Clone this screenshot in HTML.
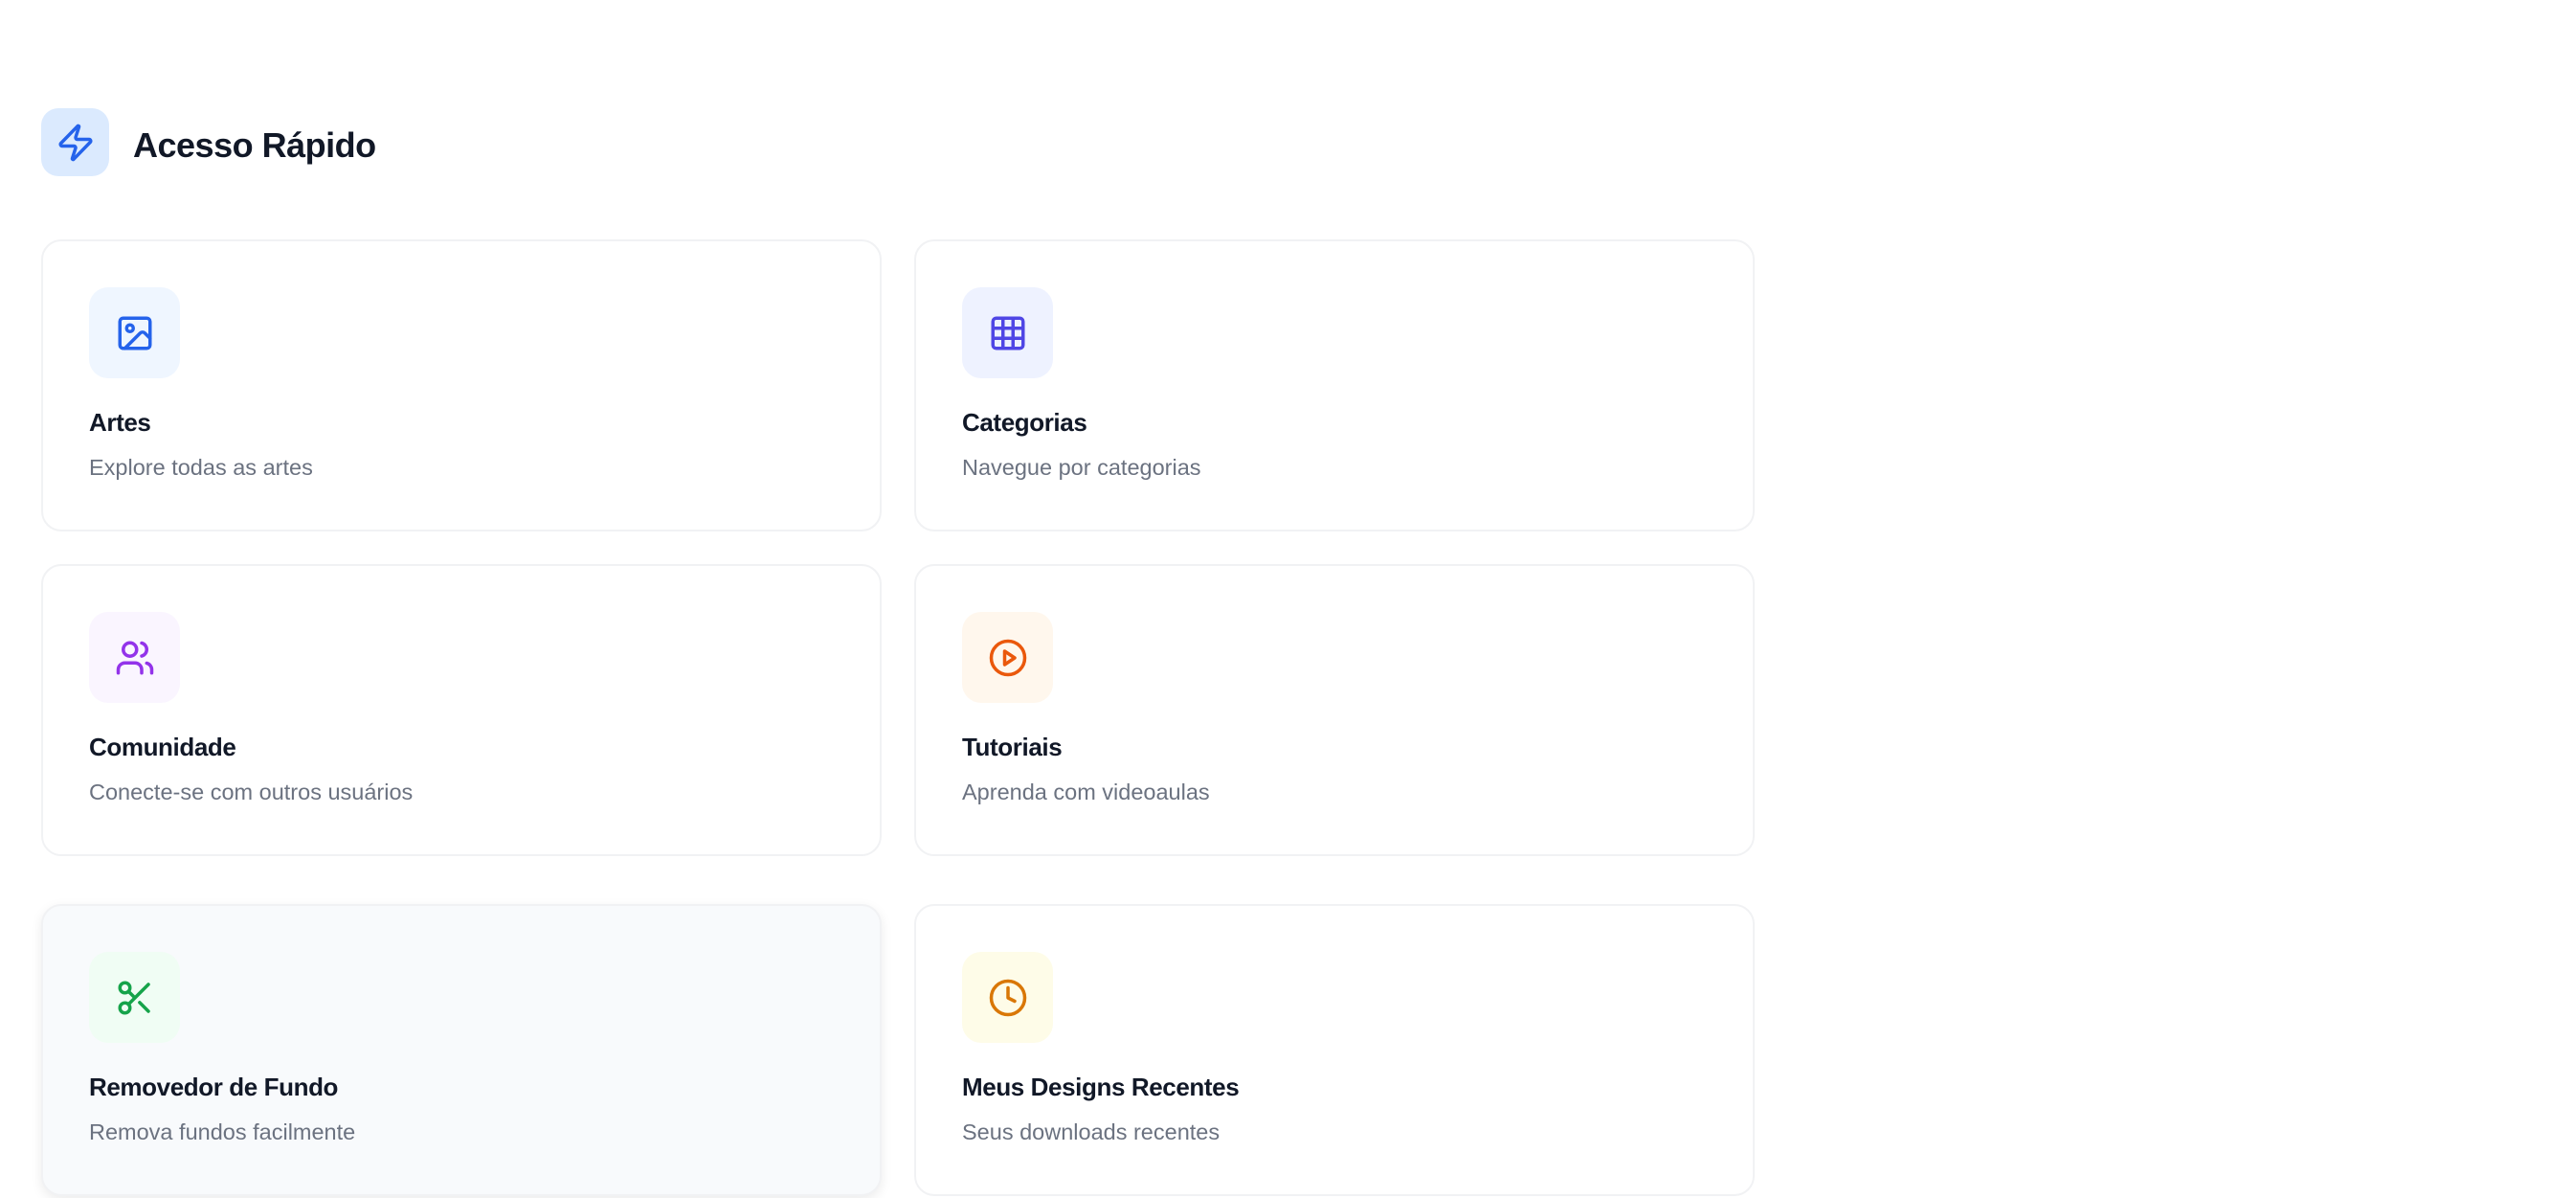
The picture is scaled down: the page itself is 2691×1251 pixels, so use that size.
<!DOCTYPE html>
<html><head><meta charset="utf-8"><style>
*{box-sizing:border-box;margin:0;padding:0}
body{width:2691px;height:1251px;background:#fff;font-family:"Liberation Sans",sans-serif;position:relative;overflow:hidden}
.hicon{position:absolute;left:43px;top:113px;width:71px;height:71px;border-radius:18px;background:#dbeafe;display:flex;align-items:center;justify-content:center}
h1{position:absolute;left:139px;top:128px;font-size:36px;font-weight:600;color:#111827;line-height:48px;letter-spacing:-0.5px}
.card{position:absolute;width:878px;height:305px;border:2px solid #f1f2f4;border-radius:21px;background:#fff;padding:48px 48px}
.card.h{background:#f8fafc;box-shadow:0 4px 12px rgba(0,0,0,.08)}
.ib{width:95px;height:95px;border-radius:20px;display:flex;align-items:center;justify-content:center}
.t{margin-top:28px;font-size:26px;font-weight:600;color:#111827;line-height:36px;letter-spacing:-0.4px}
.d{margin-top:13px;font-size:23.5px;color:#6b7280;line-height:32px}
svg{width:42px;height:42px;fill:none;stroke-width:2;stroke-linecap:round;stroke-linejoin:round}
</style></head><body>
<div class="hicon"><svg viewBox="0 0 24 24" stroke="#2563eb"><path d="M4 14a1 1 0 0 1-.78-1.63l9.9-10.2a.5.5 0 0 1 .86.46l-1.92 6.02A1 1 0 0 0 13 10h7a1 1 0 0 1 .78 1.63l-9.9 10.2a.5.5 0 0 1-.86-.46l1.92-6.02A1 1 0 0 0 11 14z"/></svg></div>
<h1>Acesso Rápido</h1>

<div class="card" style="left:43px;top:250px"><div class="ib" style="background:#eff6ff"><svg viewBox="0 0 24 24" stroke="#2563eb"><rect x="3" y="3" width="18" height="18" rx="2"/><circle cx="9" cy="9" r="2"/><path d="m21 15-3.09-3.09a2 2 0 0 0-2.82 0L6 21"/></svg></div><div class="t">Artes</div><div class="d">Explore todas as artes</div></div>

<div class="card" style="left:955px;top:250px"><div class="ib" style="background:#eef2ff"><svg viewBox="0 0 24 24" stroke="#4f46e5"><rect x="3" y="3" width="18" height="18" rx="2"/><path d="M3 9h18M3 15h18M9 3v18M15 3v18"/></svg></div><div class="t">Categorias</div><div class="d">Navegue por categorias</div></div>

<div class="card" style="left:43px;top:589px"><div class="ib" style="background:#faf5ff"><svg viewBox="0 0 24 24" stroke="#9333ea"><path d="M16 21v-2a4 4 0 0 0-4-4H6a4 4 0 0 0-4 4v2"/><circle cx="9" cy="7" r="4"/><path d="M22 21v-2a4 4 0 0 0-3-3.87M16 3.13a4 4 0 0 1 0 7.75"/></svg></div><div class="t">Comunidade</div><div class="d">Conecte-se com outros usuários</div></div>

<div class="card" style="left:955px;top:589px"><div class="ib" style="background:#fff7ed"><svg viewBox="0 0 24 24" stroke="#ea580c"><circle cx="12" cy="12" r="10"/><path d="m10 8 6 4-6 4z"/></svg></div><div class="t">Tutoriais</div><div class="d">Aprenda com videoaulas</div></div>

<div class="card h" style="left:43px;top:944px"><div class="ib" style="background:#f0fdf4"><svg viewBox="0 0 24 24" stroke="#16a34a"><circle cx="6" cy="6" r="3"/><path d="M8.12 8.12 12 12M20 4 8.12 15.88"/><circle cx="6" cy="18" r="3"/><path d="M14.8 14.8 20 20"/></svg></div><div class="t">Removedor de Fundo</div><div class="d">Remova fundos facilmente</div></div>

<div class="card" style="left:955px;top:944px"><div class="ib" style="background:#fefce8"><svg viewBox="0 0 24 24" stroke="#d97706"><circle cx="12" cy="12" r="10"/><path d="M12 6v6l4 2"/></svg></div><div class="t">Meus Designs Recentes</div><div class="d">Seus downloads recentes</div></div>
</body></html>
